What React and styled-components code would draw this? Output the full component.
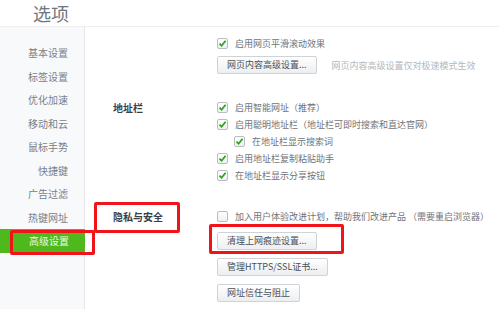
import React from "react";
import styled, { createGlobalStyle } from "styled-components";

const Global = createGlobalStyle`
  html, body {
    margin: 0;
    padding: 0;
    background: #ffffff;
    font-family: "Noto Sans CJK SC", "Liberation Sans", sans-serif;
  }
`;

const Page = styled.div`
  width: 499px;
  height: 309px;
  overflow: hidden;
  display: flex;
  flex-direction: column;
`;

const Header = styled.div`
  height: 26px;
  border-bottom: 1px solid #eeeeee;
  padding-left: 33px;
  flex-shrink: 0;
  display: flex;
  align-items: center;
`;

const Title = styled.h1`
  margin: 0;
  font-size: 18px;
  font-weight: 400;
  line-height: 24px;
  color: #6e7681;
`;

const Body = styled.div`
  flex: 1;
  display: flex;
`;

const Sidebar = styled.nav`
  width: 84px;
  flex-shrink: 0;
  background: #f8f9fb;
  border-right: 1px solid #e6e8ec;
  padding-top: 14px;
`;

const NavItem = styled.div`
  position: relative;
  height: 23.5px;
  line-height: 23.5px;
  text-align: right;
  padding-right: 16px;
  font-size: 10px;
  color: ${(p) => (p.$active ? "#eef8e4" : "#7a8089")};
  background: ${(p) => (p.$active ? "#4fb81c" : "transparent")};
  margin-right: ${(p) => (p.$active ? "-1px" : "0")};
`;

const Mark = styled.span`
  position: absolute;
  border: 3px solid #f0141a;
  border-radius: 2px;
  pointer-events: none;
`;

const Main = styled.main`
  flex: 1;
  padding: 8px 0 0 28px;
  display: flex;
  flex-direction: column;
`;

const Section = styled.section`
  display: grid;
  grid-template-columns: 104px 1fr;
  margin-top: ${(p) => p.$top || 0}px;
`;

const Label = styled.div`
  position: relative;
  font-size: 10px;
  font-weight: 700;
  color: #3a3f47;
  line-height: 17px;
  align-self: start;
`;

const Options = styled.div`
  display: flex;
  flex-direction: column;
`;

const Row = styled.label`
  display: flex;
  align-items: center;
  height: 17px;
  padding-left: ${(p) => (p.$indent ? 17 : 0)}px;
  font-size: 9px;
  color: #6f737a;
  white-space: nowrap;
`;

const Box = styled.span`
  width: 11px;
  height: 11px;
  box-sizing: border-box;
  border: 1px solid #b9bcc1;
  border-radius: 2px;
  background: linear-gradient(#ffffff, #eef0f2);
  display: flex;
  align-items: center;
  justify-content: center;
  margin-right: 7px;
  flex-shrink: 0;
`;

const ButtonLine = styled.div`
  display: flex;
  align-items: center;
  margin-top: ${(p) => p.$top}px;
`;

const Button = styled.button`
  position: relative;
  height: 18px;
  padding: 0 9px;
  box-sizing: border-box;
  border: 1px solid #cfd2d6;
  border-radius: 2px;
  background: linear-gradient(#ffffff, #eceef0);
  font-family: "Noto Sans CJK SC", "Liberation Sans", sans-serif;
  font-size: 9px;
  color: #4a4f57;
  line-height: 16px;
  white-space: nowrap;
`;

const Hint = styled.span`
  margin-left: 15px;
  font-size: 9px;
  color: #b4b8be;
  white-space: nowrap;
`;

function Check({ on }) {
  return (
    <Box>
      {on && (
        <svg width="9" height="9" viewBox="0 0 9 9">
          <path d="M1.5 4.6 L3.6 6.8 L7.6 1.8" fill="none" stroke="#2f9e1c" strokeWidth="1.7" />
        </svg>
      )}
    </Box>
  );
}

const nav = ["基本设置", "标签设置", "优化加速", "移动和云", "鼠标手势", "快捷键", "广告过滤", "热键网址", "高级设置"];

export default function App() {
  return (
    <Page>
      <Global />
      <Header>
        <Title>选项</Title>
      </Header>
      <Body>
        <Sidebar>
          {nav.map((n, i) => (
            <NavItem key={n} $active={i === nav.length - 1}>
              {n}
              {i === nav.length - 1 && <Mark style={{ left: 10, right: -10, top: 1, bottom: -2 }} />}
            </NavItem>
          ))}
        </Sidebar>
        <Main>
          <Section>
            <Label />
            <Options>
              <Row><Check on />启用网页平滑滚动效果</Row>
              <ButtonLine $top={4}>
                <Button>网页内容高级设置...</Button>
                <Hint>网页内容高级设置仅对极速模式生效</Hint>
              </ButtonLine>
            </Options>
          </Section>
          <Section $top={25}>
            <Label>地址栏</Label>
            <Options>
              <Row><Check on />启用智能网址（推荐）</Row>
              <Row><Check on />启用聪明地址栏（地址栏可即时搜索和直达官网）</Row>
              <Row $indent><Check on />在地址栏显示搜索词</Row>
              <Row><Check on />启用地址栏复制粘贴助手</Row>
              <Row><Check on />在地址栏显示分享按钮</Row>
            </Options>
          </Section>
          <Section $top={24}>
            <Label>
              隐私与安全
              <Mark style={{ left: -19, width: 80, top: -6, height: 25 }} />
            </Label>
            <Options>
              <Row><Check />加入用户体验改进计划，帮助我们改进产品 （需要重启浏览器）</Row>
              <ButtonLine $top={7}>
                <Button>
                  清理上网痕迹设置...
                  <Mark style={{ left: -9, right: -28, top: -9, bottom: -5 }} />
                </Button>
              </ButtonLine>
              <ButtonLine $top={8}>
                <Button>管理HTTPS/SSL证书...</Button>
              </ButtonLine>
              <ButtonLine $top={8}>
                <Button>网址信任与阻止</Button>
              </ButtonLine>
            </Options>
          </Section>
        </Main>
      </Body>
    </Page>
  );
}
